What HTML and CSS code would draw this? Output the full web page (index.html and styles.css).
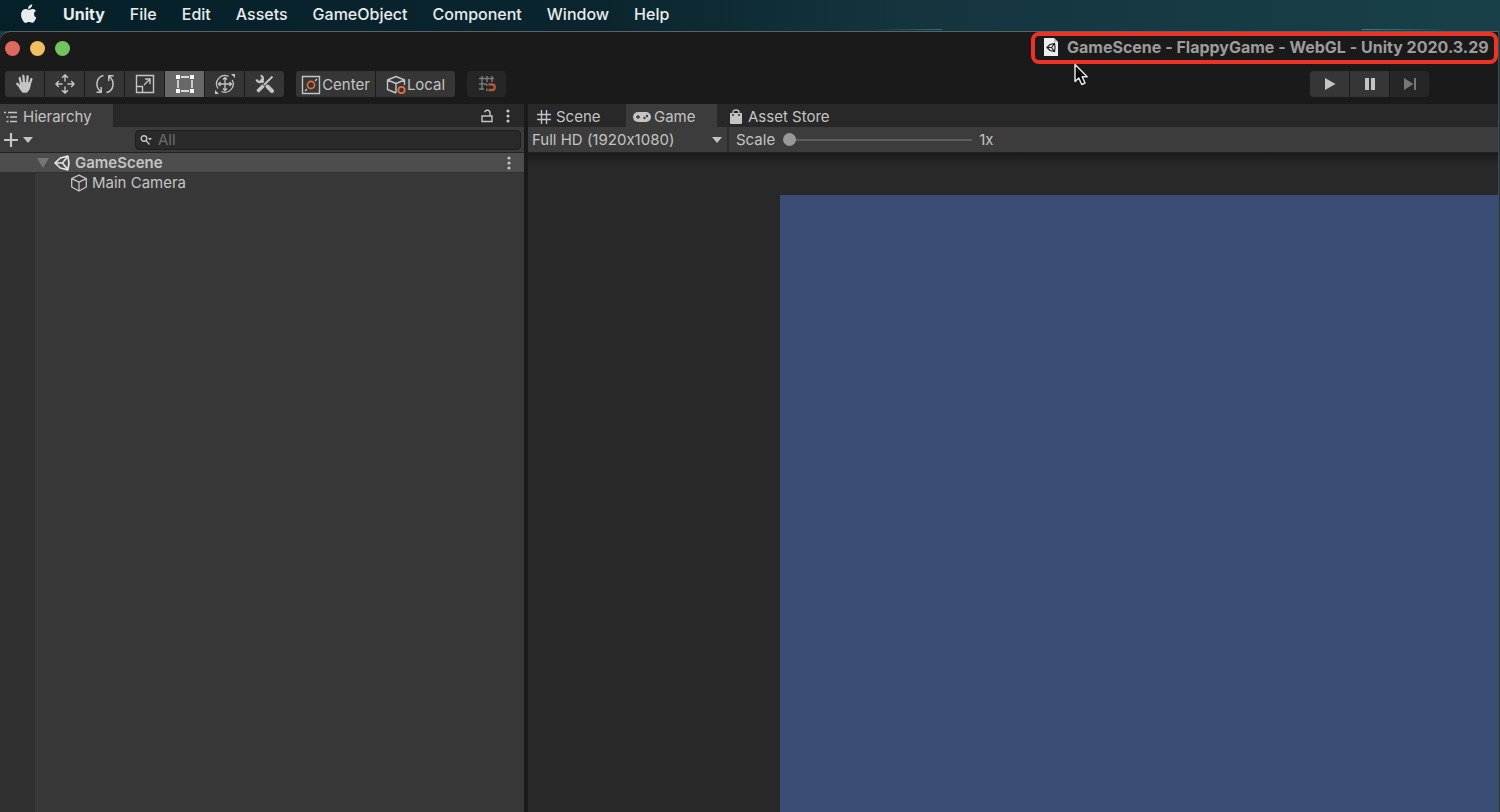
FILE: index.html
```
<!DOCTYPE html>
<html lang="en">
<head>
<meta charset="UTF-8">
<meta name="viewport" content="width=device-width, initial-scale=1">
<title>GameScene - FlappyGame - WebGL - Unity</title>
<link rel="stylesheet" href="styles.css">
</head>

<body>

    <!-- Shared icons -->
    <svg class="icon-defs" aria-hidden="true">
        <symbol id="icon-cube" viewBox="0 0 18 18">
            <path d="M9 1.2 16.3 4.6V13L9 17 1.7 13V4.6ZM1.7 4.6 9 8.2 16.3 4.6M9 8.2V17" fill="none" stroke="currentColor" stroke-width="1.3" stroke-linejoin="round"/>
        </symbol>
        <symbol id="icon-unity" viewBox="0 0 16 16">
            <path d="M1 8 6.3 3 13.8 1.2 15 8 13.8 14.8 6.3 13Z" fill="none" stroke="currentColor" stroke-width="1.7" stroke-linejoin="round"/>
            <path d="M1 8H8.5L13.3 2M8.5 8 13.3 14" fill="none" stroke="currentColor" stroke-width="1.7"/>
        </symbol>
        <symbol id="icon-dots" viewBox="0 0 4 14">
            <circle cx="2" cy="2" r="1.6"/><circle cx="2" cy="7" r="1.6"/><circle cx="2" cy="12" r="1.6"/>
        </symbol>
    </svg>

    <!-- macOS menu bar -->
    <nav class="menubar">
        <a href="#" class="menubar__apple" aria-label="Apple">
            <svg width="18" height="20" viewBox="0 0 18 20" fill="currentColor"><path d="M12.2.3c.1 1.300-.4 2.400-1.100 3.200-.8.900-1.900 1.500-3 1.400-.1-1.200.5-2.400 1.200-3.100C10.100.9 11.300.4 12.200.3ZM15.900 6.900c-1.200.7-1.900 1.800-1.900 3.200 0 1.600.9 2.900 2.300 3.500-.3 1-.8 1.900-1.400 2.800-.8 1.200-1.700 2.400-3 2.400-1.200 0-1.600-.7-3-.7s-1.900.7-3 .8c-1.300 0-2.200-1.300-3-2.500C1.200 13.900.3 9.900 2 7.200c.8-1.400 2.200-2.200 3.700-2.200 1.300 0 2.500.8 3.200.8.800 0 2.200-1 3.700-.9.700 0 2.300.3 3.300 2Z"/></svg>
        </a>
        <a href="#" class="menubar__app">Unity</a>
        <a href="#">File</a>
        <a href="#">Edit</a>
        <a href="#">Assets</a>
        <a href="#">GameObject</a>
        <a href="#">Component</a>
        <a href="#">Window</a>
        <a href="#">Help</a>
    </nav>

    <div class="window">

        <header class="titlebar">
            <div class="lights">
                <button class="light light--close" aria-label="Close"></button>
                <button class="light light--minimise" aria-label="Minimise"></button>
                <button class="light light--zoom" aria-label="Zoom"></button>
            </div>
            <h1 class="titlebar__title">
                <svg width="14" height="18" viewBox="0 0 14 18"><path d="M0 0H10L14 4V18H0Z" fill="#eee"/><path d="M10 0V4H14Z" fill="#bbb"/><path d="M3 9.500 6 6.500 10.500 5.500 11 9.500 10.500 13.500 6 12.500ZM3 9.500H7.500L10 6M7.500 9.500 10 13" fill="none" stroke="#222" stroke-width="1.200"/></svg>
                <span>GameScene - FlappyGame - WebGL - Unity 2020.3.29</span>
            </h1>
            <svg class="cursor" width="16" height="24" viewBox="0 0 16 24"><path d="M2 1.500V18.500L5.800 15 8.800 21.500 12 20 9.200 13.800H14.200Z" fill="#000" stroke="#e4e4e4" stroke-width="1.500" stroke-linejoin="round"/></svg>
        </header>

        <div class="toolbar">
            <div class="tools">
                <button class="tool" aria-label="Hand">
                    <svg width="20" height="20" viewBox="0 0 20 20" fill="none" stroke="currentColor" stroke-width="2.300" stroke-linecap="round"><path d="M6 10 4.700 4M9 9 8.400 2M12 9 12.600 2.400M14.500 11 16.400 5M6 14 2.200 9.800"/><path d="M6 9.500 13.800 9.500 14.500 12 13.500 15 11.500 17.500H8L5.500 14Z" fill="currentColor" stroke-linejoin="round"/></svg>
                </button>
                <button class="tool" aria-label="Move">
                    <svg width="20" height="20" viewBox="0 0 20 20" fill="none" stroke="currentColor" stroke-width="1.400"><path d="M10 7.500V1M7 3.800 10 .9 13 3.800M10 12.500V19M7 16.200 10 19.100 13 16.200M7.500 10H1M3.800 7 .9 10 3.800 13M12.500 10H19M16.200 7 19.100 10 16.200 13"/></svg>
                </button>
                <button class="tool" aria-label="Rotate">
                    <svg width="20" height="20" viewBox="0 0 20 20" fill="none" stroke="currentColor" stroke-width="1.500"><path d="M8.500 1.500C1.500 3 -.5 12 5.500 17.500M1.500 18.200H6.200V13M11.500 18.500C18.500 17 20.500 8 14.500 2.500M18.500 1.800H13.800V7"/></svg>
                </button>
                <button class="tool" aria-label="Scale">
                    <svg width="20" height="20" viewBox="0 0 20 20" fill="none" stroke="currentColor" stroke-width="1.400"><path d="M1.500 1.500H18.500V18.500H1.500ZM1.500 12.500H7.500V18.500M9 11 15 5M10 5H15V10"/></svg>
                </button>
                <button class="tool active" aria-label="Rect">
                    <svg width="20" height="20" viewBox="0 0 20 20"><path d="M6 3H14M6 17H14M3 6V14M17 6V14" stroke="currentColor" stroke-width="1.300"/><path d="M1 1H5V5H1ZM15 1H19V5H15ZM1 15H5V19H1ZM15 15H19V19H15Z" fill="currentColor"/></svg>
                </button>
                <button class="tool" aria-label="Transform">
                    <svg width="22" height="22" viewBox="0 0 22 22" fill="none" stroke="currentColor" stroke-width="1.300"><path d="M4 15.500A8.300 8.300 0 0 1 14.500 3.400M18.200 7A8.300 8.300 0 0 1 7.500 18.500M11 4.500V17.500M4.500 11H17.500M9 6.500 11 4.500 13 6.500M9 15.500 11 17.500 13 15.500M6.500 9 4.500 11 6.500 13M15.500 9 17.500 11 15.500 13"/><path d="M17 1H21V5ZM1 17V21H5Z" fill="currentColor" stroke="none"/></svg>
                </button>
                <button class="tool" aria-label="Custom tools">
                    <svg width="20" height="20" viewBox="0 0 20 20" fill="none" stroke="currentColor"><path d="M5.500 5.500 8.500 8.500" stroke-width="2.500"/><path d="M5.600 1.500A3.300 3.300 0 1 1 1.500 5.500" stroke-width="2.300"/><path d="M12.500 12.500 17 17" stroke-width="4" stroke-linecap="round"/><path d="M17.500 2.500 9 11" stroke-width="2"/><path d="M8.500 11.500 2.500 17.500" stroke-width="3.500"/></svg>
                </button>
            </div>

            <div class="tools">
                <button class="tool tool--text">
                    <svg width="20" height="20" viewBox="0 0 20 20" fill="none" stroke="currentColor" stroke-width="1.400"><path d="M1.500 1.500H18.500V18.500H1.500ZM4 16 6 14M14 6 16 4"/><circle cx="10" cy="10" r="3.600" stroke="#e07043" stroke-width="1.600"/></svg>
                    Center
                </button>
                <button class="tool tool--text">
                    <svg width="20" height="20" viewBox="0 0 20 20" fill="none" stroke="currentColor" stroke-width="1.400"><path d="M10 18 1.500 14.500V5L10 1.500 18.500 5V10M1.500 5 10 8.500 18.500 5M10 8.500V18" stroke-linejoin="round"/><circle cx="15.500" cy="15" r="3.200" stroke="#e07043" stroke-width="1.800"/></svg>
                    Local
                </button>
            </div>

            <div class="tools">
                <button class="tool" disabled aria-label="Grid snapping">
                    <svg width="20" height="20" viewBox="0 0 20 20" fill="none" stroke="currentColor" stroke-width="1.500"><path d="M2 4.500H17M2 10H9M5 2V16M10 2V8M15 2V8M2 15H7"/><path d="M9 15.800H10.500M9 10.800H10.500" stroke-width="2.500"/><path d="M11.500 10.500H15A2.700 2.700 0 0 1 15 16H11.500" stroke="#b05a3c" stroke-width="2.300"/></svg>
                </button>
            </div>

            <div class="tools tools--play">
                <button class="tool" aria-label="Play">
                    <svg width="12" height="14" viewBox="0 0 12 14" fill="currentColor"><path d="M1 1 11.500 7 1 13Z"/></svg>
                </button>
                <button class="tool" aria-label="Pause">
                    <svg width="12" height="14" viewBox="0 0 12 14" fill="currentColor"><path d="M1 1H5V13H1ZM7 1H11V13H7Z"/></svg>
                </button>
                <button class="tool" disabled aria-label="Step">
                    <svg width="14" height="14" viewBox="0 0 14 14" fill="currentColor"><path d="M1 1 10.500 7 1 13ZM11 1H13V13H11Z"/></svg>
                </button>
            </div>
        </div>

        <main class="panels">

            <!-- Hierarchy -->
            <section class="hierarchy">
                <div class="tabs">
                    <button class="tab tab--hierarchy active">
                        <svg width="14" height="12" viewBox="0 0 14 12" fill="none" stroke="currentColor" stroke-width="1.400"><path d="M0 1.500H2M4 1.500H13M2.500 6H4.500M6 6H13M2.500 10.500H4.500M6 10.500H13"/></svg>
                        Hierarchy
                    </button>
                    <div class="tabs__actions">
                        <button class="icon-button" aria-label="Lock">
                            <svg width="12" height="14" viewBox="0 0 12 14" fill="none" stroke="currentColor" stroke-width="1.400"><path d="M1 7H11V12.500H1ZM9 7V4A2.800 2.800 0 0 0 3.500 3.300"/></svg>
                        </button>
                        <button class="icon-button" aria-label="Hierarchy menu">
                            <svg width="4" height="14" fill="currentColor"><use href="#icon-dots"/></svg>
                        </button>
                    </div>
                </div>

                <div class="hierarchy__bar">
                    <button class="icon-button add" aria-label="Create">
                        <svg width="16" height="16" viewBox="0 0 16 16" stroke="currentColor" stroke-width="2.200"><path d="M8 1V15M1 8H15"/></svg>
                        <svg width="10" height="6" viewBox="0 0 10 6" fill="currentColor"><path d="M0 0H10L5 6Z"/></svg>
                    </button>
                    <label class="search">
                        <svg width="12" height="12" viewBox="0 0 12 12" fill="none" stroke="currentColor" stroke-width="1.400"><circle cx="4" cy="4.500" r="2.800"/><path d="M6 6.500 9.500 10.500"/><path d="M8 4H12L10 6.500Z" fill="currentColor" stroke="none"/></svg>
                        <input type="text" placeholder="All" aria-label="Search hierarchy">
                    </label>
                </div>

                <div class="scene-row">
                    <svg class="scene-row__arrow" width="12" height="10" viewBox="0 0 12 10" fill="currentColor"><path d="M0 0H12L6 10Z"/></svg>
                    <svg class="scene-row__icon" width="16" height="16"><use href="#icon-unity"/></svg>
                    <span>GameScene</span>
                    <button class="icon-button" aria-label="Scene menu">
                        <svg width="4" height="14" fill="currentColor"><use href="#icon-dots"/></svg>
                    </button>
                </div>
                <div class="tree">
                    <div class="tree__item">
                        <svg width="18" height="18"><use href="#icon-cube"/></svg>
                        <span>Main Camera</span>
                    </div>
                </div>
            </section>

            <!-- Game view -->
            <section class="game">
                <div class="tabs">
                    <button class="tab tab--scene">
                        <svg width="14" height="14" viewBox="0 0 14 14" fill="none" stroke="currentColor" stroke-width="1.400"><path d="M4.500 0V14M9.500 0V14M0 4.500H14M0 9.500H14"/></svg>
                        Scene
                    </button>
                    <button class="tab tab--game active">
                        <svg width="18" height="10" viewBox="0 0 18 10"><rect width="18" height="10" rx="5" fill="currentColor"/><path d="M3 5H7M5 3V7" stroke="#3c3c3c" stroke-width="1.300"/><circle cx="11.500" cy="6" r="1.200" fill="#3c3c3c"/><circle cx="14" cy="4" r="1.200" fill="#3c3c3c"/></svg>
                        Game
                    </button>
                    <button class="tab tab--store">
                        <svg width="14" height="16" viewBox="0 0 14 16"><path d="M1 4H13V14A1 1 0 0 1 12 15H2A1 1 0 0 1 1 14Z" fill="currentColor"/><path d="M4 6V3Q4 1 7 1T10 3V6" fill="none" stroke="currentColor" stroke-width="1.400"/><path d="M3 6H5M9 6H11" stroke="#282828" stroke-width="1.500"/></svg>
                        Asset Store
                    </button>
                </div>

                <div class="game__bar">
                    <div class="resolution">
                        <select aria-label="Resolution">
                            <option>Full HD (1920x1080)</option>
                        </select>
                        <svg width="10" height="6" viewBox="0 0 10 6" fill="currentColor"><path d="M0 0H10L5 6Z"/></svg>
                    </div>
                    <label for="scale">Scale</label>
                    <input id="scale" type="range" min="1" max="5" step="0.1" value="1">
                    <output for="scale">1x</output>
                </div>

                <div class="game__view">
                    <div class="game__screen"></div>
                </div>
            </section>

        </main>
    </div>

</body>
</html>
```
FILE: styles.css
```
:root
{
    --window-colour: #1a1a1a;
    --strip-colour: #282828;
    --panel-colour: #3c3c3c;
    --button-colour: #363636;
    --text-colour: #c4c4c4;
    --highlight: #f03224;
}

*
{
    box-sizing: border-box;
}

body
{
    margin: 0;
    height: 100vh;
    display: flex;
    flex-direction: column;
    overflow: hidden;
    background-color: #173c45;
    color: var(--text-colour);
    font-family: Inter, "Liberation Sans", sans-serif;
    font-size: 15px;
    font-variant-ligatures: no-contextual; /* keeps the x in 1920x1080 */
    line-height: 20px;
}

button, input, select
{
    margin: 0;
    padding: 0;
    border: none;
    background: none;
    color: inherit;
    font: inherit;
    font-variant-ligatures: inherit;
}

svg
{
    flex: none;
}

.icon-defs
{
    position: absolute;
    width: 0;
    height: 0;
}

/* menu bar */

.menubar
{
    display: flex;
    align-items: center;
    flex: none;
    gap: 25px;
    height: 31px;
    padding: 0 20px 4px;
    background:
        linear-gradient(90deg, transparent, #2f6f7b) 61% 29px / 70px 1px no-repeat,
        linear-gradient(90deg, #3a808a, transparent) right 48px top 29px / 90px 1px no-repeat,
        linear-gradient(90deg, #06202a, #0a252d 40%, #14343e 60%, #194049);
    font-size: 16px;
    font-weight: 500;
}

.menubar a
{
    color: #e8ecec;
    text-decoration: none;
}

.menubar__apple
{
    display: flex;
}

.menubar .menubar__app
{
    font-weight: 700;
}

/* window and title */

.window
{
    flex: 1;
    min-height: 0;
    display: flex;
    flex-direction: column;
    margin-right: 1px;
    border-top: 1px solid #5d6364;
    border-right: 1px solid #454b4c;
    border-top-left-radius: 10px;
    background-color: var(--window-colour);
}

.titlebar
{
    position: relative;
    display: flex;
    justify-content: space-between;
    flex: none;
    height: 32px;
}

.lights
{
    display: flex;
    align-items: center;
    gap: 10px;
    padding-left: 5px;
}

.light
{
    width: 15px;
    height: 15px;
    border-radius: 50%;
}

.light--close { background-color: #e0695f; }
.light--minimise { background-color: #edbf5f; }
.light--zoom { background-color: #72c35d; }

.titlebar__title
{
    display: flex;
    align-items: center;
    gap: 9px;
    width: 467px;
    margin: 0;
    padding: 0 0 2px 9px;
    border: 4px solid var(--highlight);
    border-radius: 8px;
    color: #9c9c9c;
    font-size: 16px;
    font-weight: 700;
    white-space: nowrap;
}

.cursor
{
    position: absolute;
    top: 31px;
    right: 409px;
}

/* toolbar */

.toolbar
{
    display: flex;
    gap: 12px;
    flex: none;
    padding: 7px 69px 7px 5px;
}

.tools
{
    display: flex;
    gap: 1px;
    overflow: hidden;
    border-radius: 3px;
}

.tools--play
{
    margin-left: auto;
}

.tool
{
    display: flex;
    align-items: center;
    justify-content: center;
    width: 39px;
    height: 26px;
    background-color: var(--button-colour);
}

.tool.active
{
    background-color: #686868;
    color: #fff;
}

.tool:disabled
{
    background-color: #262626;
    color: #777;
}

.tool--text
{
    gap: 1px;
    width: 79px;
    padding-top: 2px;
}

/* panels */

.panels
{
    flex: 1;
    min-height: 0;
    display: flex;
    gap: 4px;
}

.hierarchy, .game
{
    display: flex;
    flex-direction: column;
}

.hierarchy
{
    flex: none;
    width: 524px;
    background-color: #383838;
}

.game
{
    flex: 1;
    min-width: 0;
}

.tabs
{
    display: flex;
    flex: none;
    height: 23px;
    background-color: var(--strip-colour);
}

.tab
{
    display: flex;
    align-items: center;
    gap: 5px;
    padding: 2px 9px 0;
}

.tab.active
{
    background-color: var(--panel-colour);
}

.tab--hierarchy
{
    width: 113px;
    padding-left: 4px;
}

.tab--scene
{
    width: 98px;
}

.tab--game
{
    width: 91px;
    gap: 3px;
    padding-left: 7px;
}

.tab--store
{
    padding-left: 12px;
}

.tabs__actions
{
    display: flex;
    gap: 13px;
    margin-left: auto;
    padding-right: 14px;
}

.icon-button
{
    display: flex;
    align-items: center;
}

.hierarchy__bar, .game__bar
{
    display: flex;
    align-items: center;
    flex: none;
    height: 26px;
    border-bottom: 1px solid #222;
    background-color: var(--panel-colour);
}

.hierarchy__bar
{
    justify-content: space-between;
    padding: 0 3px;
}

.add
{
    gap: 4px;
}

.search
{
    display: flex;
    align-items: center;
    gap: 6px;
    width: 386px;
    height: 20px;
    padding-left: 4px;
    border: 1px solid #1e1e1e;
    border-radius: 4px;
    background-color: #2a2a2a;
}

.search input
{
    flex: 1;
    outline: none;
}

.search input::placeholder
{
    color: #6c6c6c;
}

.scene-row
{
    display: flex;
    align-items: center;
    flex: none;
    gap: 5px;
    height: 20px;
    padding: 0 13px 0 37px;
    border-bottom: 1px solid #303030;
    background-color: #4d4d4d;
    font-weight: 600;
}

.scene-row__arrow
{
    color: #767676;
}

.scene-row__icon
{
    color: #e6e6e6;
}

.scene-row .icon-button
{
    margin-left: auto;
}

.tree
{
    flex: 1;
    border-left: 35px solid #303030;
}

.tree__item
{
    display: flex;
    align-items: center;
    gap: 4px;
    padding-left: 35px;
}

/* game view */

.resolution
{
    display: flex;
    align-items: center;
    width: 201px;
    height: 100%;
    padding: 0 5px 0 4px;
    border-right: 2px solid #2c2c2c;
}

.resolution select
{
    flex: 1;
    appearance: none;
    outline: none;
}

.game__bar label
{
    padding: 0 8px 0 7px;
}

.game__bar input
{
    appearance: none;
    width: 189px;
    height: 13px;
}

.game__bar input::-webkit-slider-runnable-track
{
    height: 13px;
    background: linear-gradient(#5e5e5e, #5e5e5e) center / 100% 2px no-repeat;
}

.game__bar input::-webkit-slider-thumb
{
    appearance: none;
    width: 13px;
    height: 13px;
    border-radius: 50%;
    background-color: #999;
}

.game__bar output
{
    padding-left: 7px;
}

.game__view
{
    flex: 1;
    display: flex;
    padding: 42px 0 0 252px;
    background: linear-gradient(#1b1b1b, #282828 12px);
}

.game__screen
{
    flex: 1;
    background-color: #3a4c73;
}
```
